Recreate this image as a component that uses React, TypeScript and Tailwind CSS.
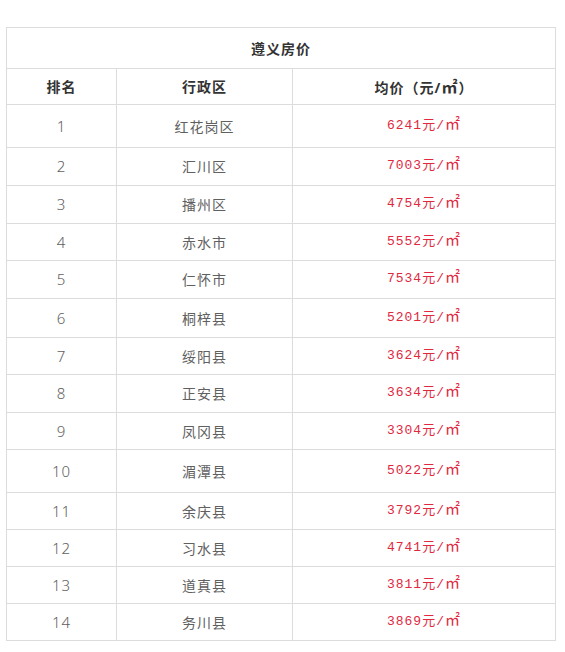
const rows: { rank: number; area: string; price: string; h: string }[] = [
  { rank: 1, area: "红花岗区", price: "6241", h: "h-[43px]" },
  { rank: 2, area: "汇川区", price: "7003", h: "h-[38px]" },
  { rank: 3, area: "播州区", price: "4754", h: "h-[38px]" },
  { rank: 4, area: "赤水市", price: "5552", h: "h-[37px]" },
  { rank: 5, area: "仁怀市", price: "7534", h: "h-[38px]" },
  { rank: 6, area: "桐梓县", price: "5201", h: "h-[39px]" },
  { rank: 7, area: "绥阳县", price: "3624", h: "h-[37px]" },
  { rank: 8, area: "正安县", price: "3634", h: "h-[38px]" },
  { rank: 9, area: "凤冈县", price: "3304", h: "h-[37px]" },
  { rank: 10, area: "湄潭县", price: "5022", h: "h-[43px]" },
  { rank: 11, area: "余庆县", price: "3792", h: "h-[37px]" },
  { rank: 12, area: "习水县", price: "4741", h: "h-[37px]" },
  { rank: 13, area: "道真县", price: "3811", h: "h-[37px]" },
  { rank: 14, area: "务川县", price: "3869", h: "h-[37px]" },
];

export default function App() {
  return (
    <div className="min-h-[652px] w-[565px] bg-white pt-[27px] pl-[6px] font-['Noto_Sans','Noto_Sans_CJK_SC',sans-serif]">
      <table className="w-[550px] table-fixed border-collapse text-[14px] text-[#606060]">
        <colgroup>
          <col className="w-[110px]" />
          <col className="w-[176px]" />
          <col />
        </colgroup>
        <tbody>
          {/* Title */}
          <tr className="h-[41px]">
            <td colSpan={3} className="border border-[#dcdcdc] text-center font-bold text-[#333] tracking-[1px]">
              遵义房价
            </td>
          </tr>

          {/* Header */}
          <tr className="h-[36px] font-bold text-[#333]">
            <td className="border border-[#dcdcdc] text-center tracking-[1px]">排名</td>
            <td className="border border-[#dcdcdc] text-center tracking-[1px]">行政区</td>
            <td className="border border-[#dcdcdc] text-center tracking-[1px]">
              均价（元/<span className="text-[16px]">㎡</span>）
            </td>
          </tr>

          {rows.map((r) => (
            <tr key={r.rank} className={r.h}>
              <td className="border border-[#dcdcdc] text-center text-[15px] font-light tracking-[1px]">{r.rank}</td>
              <td className="border border-[#dcdcdc] text-center tracking-[1px]">{r.area}</td>
              <td className="border border-[#dcdcdc] text-center text-[13px] text-[#e0283f] font-['Liberation_Mono','Noto_Sans_CJK_SC',monospace] tracking-[1px]">
                {r.price}元/<span className="text-[15px]">㎡</span>
              </td>
            </tr>
          ))}
        </tbody>
      </table>
    </div>
  );
}
